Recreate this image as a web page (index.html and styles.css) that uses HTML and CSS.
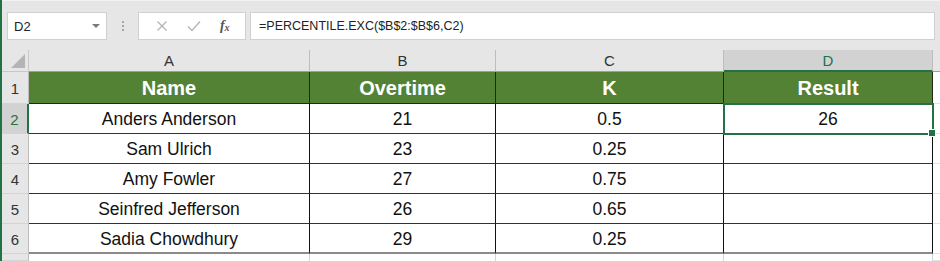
FILE: index.html
```html
<!DOCTYPE html>
<html lang="en">
<head>
    <meta charset="UTF-8">
    <title>PERCENTILE.EXC</title>
    <link rel="stylesheet" href="styles.css">
</head>
<body>
<div class="app">
    <div class="formula-bar">
        <div class="name-box">
            <span>D2</span>
            <span class="caret"></span>
        </div>
        <div class="grip"><i></i><i></i><i></i></div>
        <div class="fx-buttons">
            <svg class="icon" width="12" height="12" viewBox="0 0 12 12"><path d="M1.5 1.5 L10.5 10.5 M10.5 1.5 L1.5 10.5" stroke="#b4b4b4" stroke-width="1.3" fill="none"/></svg>
            <svg class="icon" width="14" height="12" viewBox="0 0 14 12"><path d="M1 6.5 L5 10.5 L13 1.5" stroke="#b4b4b4" stroke-width="1.3" fill="none"/></svg>
            <span class="fx">f<span class="fx-x">x</span></span>
        </div>
        <div class="formula-input">=PERCENTILE.EXC($B$2:$B$6,C2)</div>
    </div>

    <div class="sheet">
        <!-- column headers -->
        <div class="corner"><span class="tri"></span></div>
        <div class="col-head">A</div>
        <div class="col-head">B</div>
        <div class="col-head">C</div>
        <div class="col-head active">D</div>
        <div class="col-head blank"></div>

        <!-- row 1 -->
        <div class="row-head">1</div>
        <div class="cell title">Name</div>
        <div class="cell title">Overtime</div>
        <div class="cell title">K</div>
        <div class="cell title">Result</div>
        <div class="cell empty"></div>

        <!-- row 2 -->
        <div class="row-head active">2</div>
        <div class="cell">Anders Anderson</div>
        <div class="cell">21</div>
        <div class="cell">0.5</div>
        <div class="cell selected">26<span class="handle"></span></div>
        <div class="cell empty"></div>

        <div class="row-head">3</div>
        <div class="cell">Sam Ulrich</div>
        <div class="cell">23</div>
        <div class="cell">0.25</div>
        <div class="cell"></div>
        <div class="cell empty"></div>

        <div class="row-head">4</div>
        <div class="cell">Amy Fowler</div>
        <div class="cell">27</div>
        <div class="cell">0.75</div>
        <div class="cell"></div>
        <div class="cell empty"></div>

        <div class="row-head">5</div>
        <div class="cell">Seinfred Jefferson</div>
        <div class="cell">26</div>
        <div class="cell">0.65</div>
        <div class="cell"></div>
        <div class="cell empty"></div>

        <div class="row-head">6</div>
        <div class="cell last">Sadia Chowdhury</div>
        <div class="cell last">29</div>
        <div class="cell last">0.25</div>
        <div class="cell last"></div>
        <div class="cell empty"></div>

        <div class="row-head"></div>
        <div class="cell rest"></div>
        <div class="cell rest"></div>
        <div class="cell rest"></div>
        <div class="cell rest"></div>
        <div class="cell empty"></div>
    </div>
</div>
</body>
</html>
```

FILE: styles.css
```css
body {
    margin: 0;
    font-family: "Liberation Sans", Arial, sans-serif;
    background-color: #e6e6e6;
    overflow: hidden;
}
.app {
    width: 940px;
    height: 261px;
    box-sizing: border-box;
    border-left: 2px solid #217346;
    background-color: #e6e6e6;
}

/* formula bar */
.formula-bar {
    display: flex;
    align-items: stretch;
    height: 28px;
    padding: 11px 5px 0 5px;
    border-top: 1px solid #f2f2f2;
    margin-bottom: 10px;
}
.name-box {
    width: 100px;
    box-sizing: border-box;
    background-color: #fff;
    border: 1px solid #d0d0d0;
    display: flex;
    align-items: center;
    justify-content: space-between;
    padding: 0 6px 0 6px;
    font-size: 13px;
    color: #222;
}
.caret {
    width: 0;
    height: 0;
    border-left: 4px solid transparent;
    border-right: 4px solid transparent;
    border-top: 4px solid #7a7a7a;
}
.grip {
    width: 31px;
    display: flex;
    flex-direction: column;
    align-items: center;
    justify-content: center;
    gap: 2px;
}
.grip i {
    width: 2px;
    height: 2px;
    background-color: #a6a6a6;
}
.fx-buttons {
    width: 108px;
    box-sizing: border-box;
    background-color: #fff;
    border: 1px solid #d0d0d0;
    display: flex;
    align-items: center;
    justify-content: space-around;
    padding: 0 6px 0 8px;
}
.fx {
    font-family: "Liberation Serif", serif;
    font-style: italic;
    font-weight: bold;
    font-size: 14px;
    color: #555;
}
.fx-x {
    font-size: 10px;
    position: relative;
    top: 1px;
}
.formula-input {
    flex: 1;
    margin-left: 4px;
    background-color: #fff;
    border: 1px solid #d0d0d0;
    font-size: 12.5px;
    color: #222;
    display: flex;
    align-items: center;
    padding-left: 8px;
}

/* sheet grid */
.sheet {
    display: grid;
    grid-template-columns: 27px 281px 186px 228px 209px 1fr;
    grid-template-rows: 22px 32px repeat(5, 30px) 1fr;
    height: 211px;
}
.corner {
    position: relative;
    border-right: 1px solid #c8c8c8;
    border-bottom: 1px solid #c8c8c8;
}
.tri {
    position: absolute;
    right: 3px;
    bottom: 3px;
    width: 0;
    height: 0;
    border-left: 14px solid transparent;
    border-bottom: 14px solid #b4b4b4;
}
.col-head {
    display: flex;
    align-items: center;
    justify-content: center;
    font-size: 15px;
    color: #333;
    border-right: 1px solid #bdbdbd;
    border-bottom: 1px solid #9e9e9e;
}
.col-head.active {
    background-color: #d2d2d2;
    color: #217346;
    border-bottom: 2px solid #217346;
}
.col-head.blank {
    border-right: none;
}
.row-head {
    display: flex;
    align-items: center;
    justify-content: center;
    padding-top: 2px;
    box-sizing: border-box;
    font-size: 15px;
    color: #333;
    border-right: 1px solid #bdbdbd;
    border-bottom: 1px solid #d4d4d4;
}
.row-head.active {
    background-color: #d2d2d2;
    color: #217346;
    border-right: 2px solid #217346;
}
.cell {
    display: flex;
    align-items: center;
    justify-content: center;
    padding-top: 2px;
    box-sizing: border-box;
    background-color: #fff;
    font-size: 17.5px;
    color: #111;
    border-right: 1px solid #111;
    border-bottom: 1px solid #333;
}
.cell.title {
    background-color: #548235;
    color: #fff;
    font-weight: bold;
    font-size: 20px;
    border-bottom: 1px solid #1e2a16;
    border-right: 1px solid #1e2a16;
}
.cell.last {
    border-bottom: 2px solid #8a8a8a;
}
.cell.empty {
    border-right: none;
    border-bottom: 1px solid #e2e2e2;
}
.cell.rest {
    border-right: 1px solid #d4d4d4;
    border-bottom: none;
}
.cell.selected {
    position: relative;
    outline: 2px solid #217346;
    outline-offset: -1px;
}
.handle {
    position: absolute;
    right: -4px;
    bottom: -4px;
    width: 6px;
    height: 6px;
    background-color: #217346;
    border: 1px solid #fff;
}
```
